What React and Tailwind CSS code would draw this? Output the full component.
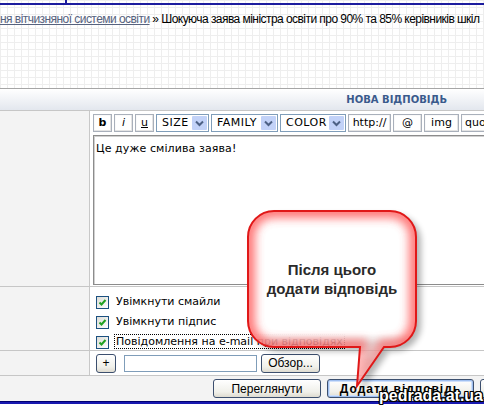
import React from "react";

const P =
  "M 34 11 H 150 A 26 26 0 0 1 176 37 V 121 A 26 26 0 0 1 150 147 H 144 L 117 186 L 120 147 H 34 A 26 26 0 0 1 8 121 V 37 A 26 26 0 0 1 34 11 Z";

function Callout() {
  return (
    <div className="absolute left-[240px] top-[200px] w-[190px] h-[200px]">
      <svg width="190" height="200" viewBox="0 0 190 200" className="absolute left-0 top-0">
        <defs>
          <clipPath id="cc">
            <path d={P} />
          </clipPath>
          <filter id="glow" x="-30%" y="-30%" width="160%" height="160%">
            <feGaussianBlur stdDeviation="5" />
          </filter>
          <filter id="shd" x="-30%" y="-30%" width="160%" height="160%">
            <feGaussianBlur stdDeviation="3" />
          </filter>
          <linearGradient id="fillg" x1="0" y1="0" x2="0" y2="1">
            <stop offset="0" stopColor="#fff" stopOpacity="1" />
            <stop offset="0.7" stopColor="#fff" stopOpacity="1" />
            <stop offset="0.76" stopColor="#fff" stopOpacity="0.6" />
            <stop offset="1" stopColor="#fff" stopOpacity="0.6" />
          </linearGradient>
          <linearGradient id="glowmask" x1="0" y1="0" x2="0" y2="1">
            <stop offset="0" stopColor="#fff" stopOpacity="1" />
            <stop offset="0.7" stopColor="#fff" stopOpacity="1" />
            <stop offset="0.78" stopColor="#fff" stopOpacity="0.55" />
            <stop offset="1" stopColor="#fff" stopOpacity="0.55" />
          </linearGradient>
          <mask id="gm">
            <rect x="0" y="0" width="190" height="200" fill="url(#glowmask)" />
          </mask>
        </defs>
        <path d={P} transform="translate(5,4)" fill="#000" opacity="0.3" filter="url(#shd)" />
        <path d={P} fill="url(#fillg)" />
        <g clipPath="url(#cc)" mask="url(#gm)">
          <path d={P} fill="none" stroke="#ff4a4a" strokeWidth="14" opacity="0.75" filter="url(#glow)" />
        </g>
        <path d={P} fill="none" stroke="#e01818" strokeWidth="2" />
      </svg>
      <div className="absolute left-[8px] top-[60px] w-[168px] text-center font-['Liberation_Sans',Arial,sans-serif] font-bold text-[15px] leading-[19px] text-[#2a2a2a]">
        Після цього
        <br />
        додати відповідь
      </div>
    </div>
  );
}

function ToolBtn({ children, w, cls = "" }) {
  return (
    <div
      className={`h-[18px] shrink-0 flex items-center justify-center bg-white border border-[#a9b0bb] shadow-[inset_-1px_-1px_0_#e4e4e4,inset_1px_1px_0_#fafafa] text-[11px] text-black ${cls}`}
      style={{ width: w }}
    >
      {children}
    </div>
  );
}

function Sel({ label, w }) {
  return (
    <div
      className="h-[18px] shrink-0 flex items-center justify-between bg-white border border-[#7f9db9] pl-[5px] pr-[1px]"
      style={{ width: w }}
    >
      <span className="text-[11px] tracking-[0.5px] text-black">{label}</span>
      <div className="w-[15px] h-[14px] bg-[#c2d2f8] flex items-center justify-center rounded-[1px]">
        <svg width="9" height="7" viewBox="0 0 9 7">
          <path d="M1 1.5 L4.5 5 L8 1.5" fill="none" stroke="#4d6185" strokeWidth="2" />
        </svg>
      </div>
    </div>
  );
}

function Check({ children }) {
  return (
    <div className="h-[20px] flex items-center">
      <div className="w-[13px] h-[13px] shrink-0 border border-[#1c5180] bg-[linear-gradient(135deg,#dcdcd7,#ffffff)] flex items-center justify-center">
        <svg width="9" height="9" viewBox="0 0 9 9">
          <path d="M1.5 4.5 L3.5 6.5 L7.5 2" fill="none" stroke="#21a121" strokeWidth="2" />
        </svg>
      </div>
      <div className="ml-[7px] whitespace-nowrap">{children}</div>
    </div>
  );
}

function XpBtn({ children, cls = "", w }) {
  return (
    <div
      className={`h-[19px] shrink-0 whitespace-nowrap flex items-center justify-center rounded-[3px] border border-[#3c4f6e] bg-[linear-gradient(#ffffff,#f0f0ea_70%,#dedbd0)] text-[12px] text-black font-['Liberation_Sans',Arial,sans-serif] ${cls}`}
      style={{ width: w }}
    >
      {children}
    </div>
  );
}

export default function App() {
  return (
    <div className="w-[484px] h-[406px] overflow-hidden relative bg-white font-['DejaVu_Sans',Verdana,sans-serif]">
      {/* top area with grid */}
      <div className="h-[88px] bg-white bg-[linear-gradient(to_right,#eeeeee_1px,transparent_1px),linear-gradient(to_bottom,#eeeeee_1px,transparent_1px)] bg-[size:7px_7px]">
        <div className="flex h-[3px]">
          <div className="w-[65px]" />
          <div className="w-[2px] h-[3px] bg-[#1c1c9e]" />
        </div>
        <div className="h-[2px] bg-[#1c1c9e]" />
        <div className="mt-[7px] whitespace-nowrap text-[12px] leading-[15px] tracking-[-0.55px] font-['Liberation_Sans',Arial,sans-serif] text-black">
          <span className="text-[#56627e] underline">ня вітчизняної системи освіти</span> » Шокуюча заява міністра освіти про 90% та 85% керівників шкіл
        </div>
      </div>
      {/* header */}
      <div className="h-[22px] border-t border-[#a6a6a6] bg-[linear-gradient(#ffffff,#e3e7ee)] flex items-center justify-end pr-[37px]">
        <span className="font-bold text-[10px] text-[#3a5a8c]">НОВА ВІДПОВІДЬ</span>
      </div>
      {/* row 1 */}
      <div className="flex h-[176px] border-t border-[#c6c6c6]">
        <div className="w-[90px] shrink-0 bg-[#f3f3f3] border-r border-[#c8c8c8]" />
        <div className="w-[1px] shrink-0 bg-white" />
        <div className="flex-1 bg-white pl-[2px] pt-[3px] overflow-hidden">
          <div className="flex gap-[2px] w-[440px]">
            <ToolBtn w={19} cls="font-bold">b</ToolBtn>
            <ToolBtn w={19} cls="italic">i</ToolBtn>
            <ToolBtn w={19} cls="underline">u</ToolBtn>
            <Sel label="SIZE" w={53} />
            <Sel label="FAMILY" w={67} />
            <Sel label="COLOR" w={66} />
            <ToolBtn w={43}>http://</ToolBtn>
            <ToolBtn w={29}>@</ToolBtn>
            <ToolBtn w={35}>img</ToolBtn>
            <ToolBtn w={40}>quote</ToolBtn>
          </div>
          <div className="mt-[3px] h-[150px] w-[420px] border border-[#8c8c8c] shadow-[inset_1px_1px_0_#d0d0d0] bg-white px-[2px] pt-[5px] text-[11px] text-black tracking-[0.1px]">
            Це дуже смілива заява!
          </div>
        </div>
      </div>
      {/* row 2 */}
      <div className="flex h-[64px] border-t border-[#c6c6c6]">
        <div className="w-[90px] shrink-0 bg-[#f3f3f3] border-r border-[#c8c8c8]" />
        <div className="w-[1px] shrink-0 bg-white" />
        <div className="flex-1 bg-white pl-[5px] pt-[5px] text-[11px] text-black">
          <Check>Увімкнути смайли</Check>
          <Check>Увімкнути підпис</Check>
          <Check>
            <span className="border border-dotted border-black px-[1px] -ml-[2px]">
              Повідомлення на e-mail при відповідях
            </span>
          </Check>
        </div>
      </div>
      {/* row 3 */}
      <div className="flex h-[25px] border-t border-[#c6c6c6]">
        <div className="w-[90px] shrink-0 bg-[#f3f3f3] border-r border-[#c8c8c8]" />
        <div className="w-[1px] shrink-0 bg-white" />
        <div className="flex-1 bg-white pl-[5px] flex items-center">
          <XpBtn w={20} cls="h-[18px]">+</XpBtn>
          <div className="ml-[8px] w-[133px] h-[17px] shrink-0 border border-[#7f9db9] bg-white" />
          <XpBtn w={59} cls="ml-[4px] h-[17px]">Обзор...</XpBtn>
        </div>
      </div>
      {/* row 4 */}
      <div className="h-[26px] border-t border-[#c6c6c6] bg-[#f3f3f3] flex items-center pl-[213px] gap-[6px]">
        <XpBtn w={108}>Переглянути</XpBtn>
        <XpBtn w={147} cls="font-bold tracking-[1px] shadow-[inset_0_0_0_1px_#9fbff0,inset_0_0_0_2px_#cfe0fa]">
          Додати відповідь
        </XpBtn>
        <XpBtn w={80}>Скасувати</XpBtn>
      </div>
      {/* bottom blue */}
      <div className="h-[3px] bg-[#1818b0] border-t border-[#000070]" />

      <Callout />

      <div className="absolute right-[1px] bottom-[1px] font-['Liberation_Sans',Arial,sans-serif] font-bold text-[16px] leading-[18px] text-white [text-shadow:-1px_-1px_0_#000,1px_-1px_0_#000,-1px_1px_0_#000,1px_1px_0_#000,0_1px_0_#000,1px_0_0_#000,-1px_0_0_#000,0_-1px_0_#000]">
        pedrada.at.ua
      </div>
    </div>
  );
}
